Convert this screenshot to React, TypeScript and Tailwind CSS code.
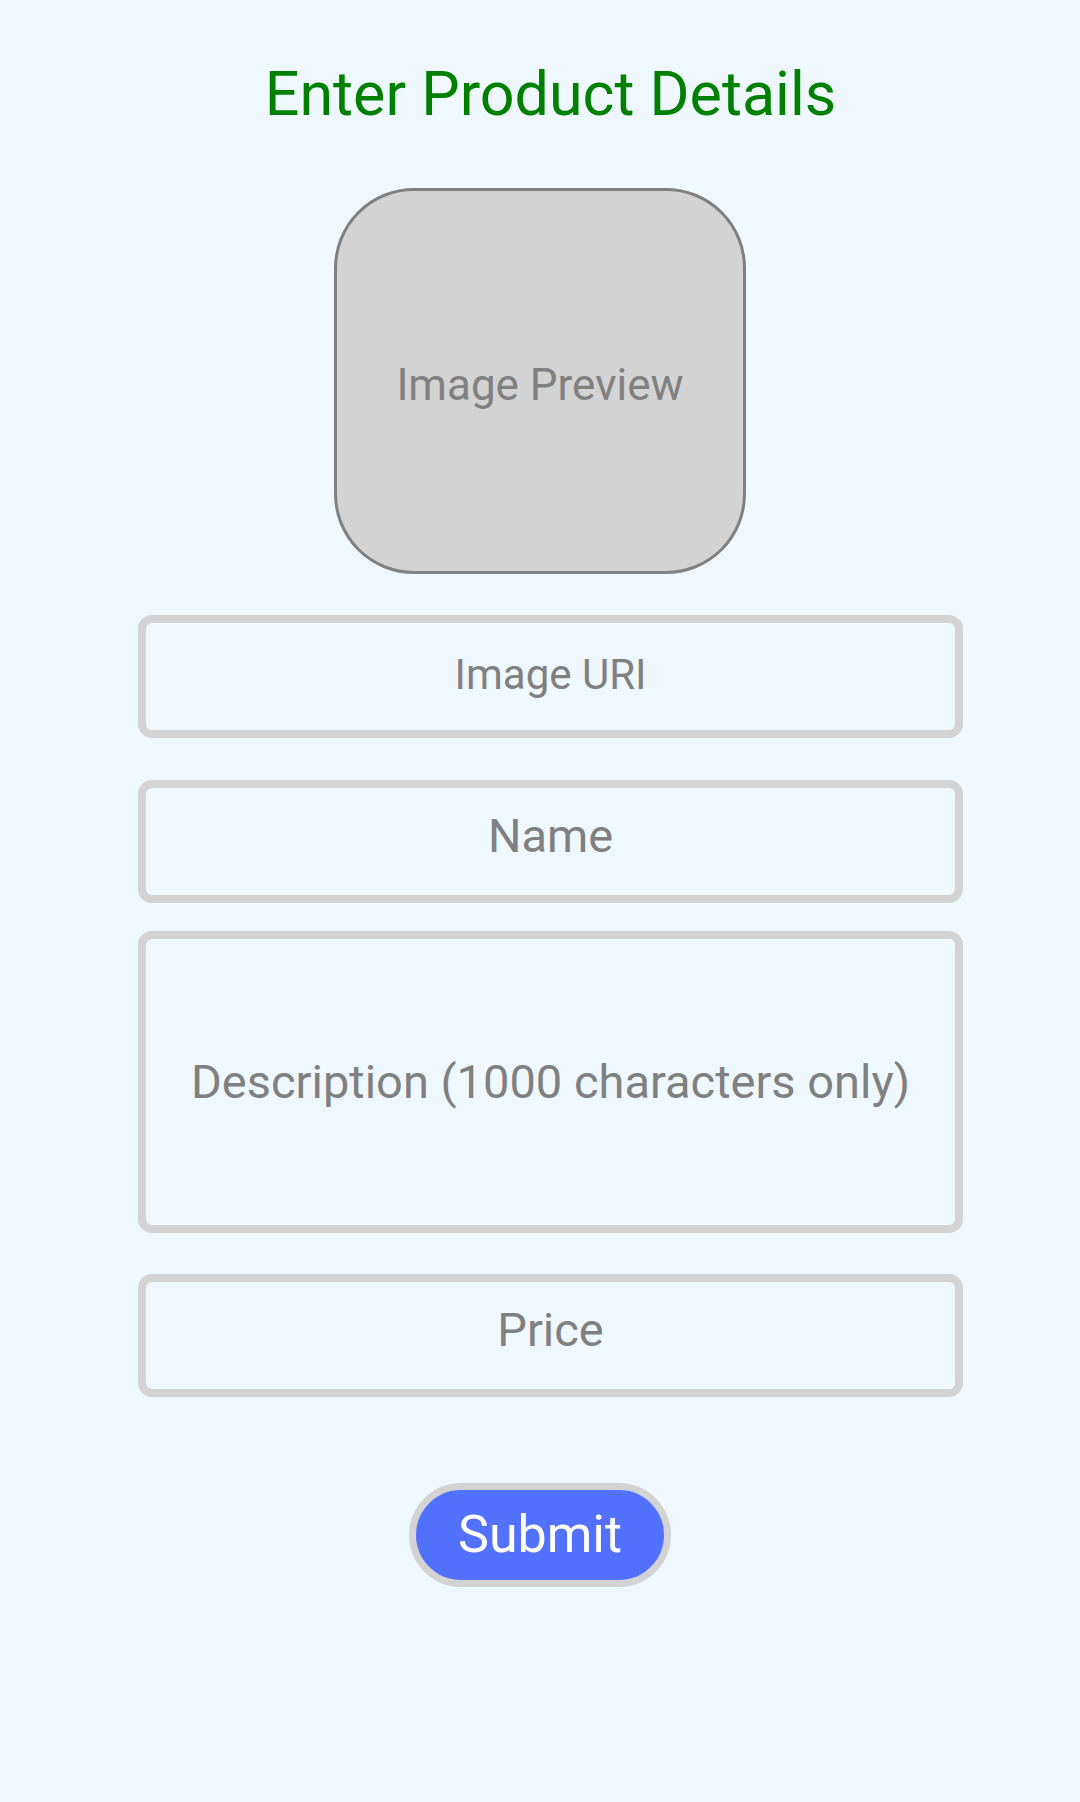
import React from "react";

const inputClass =
  "h-[123px] w-full rounded-[14px] border-[8px] border-[#d3d3d3] bg-transparent pb-[12px] text-center text-[47px] text-[#808080] outline-none placeholder:text-[#808080]";

export default function App() {
  return (
    <div className="min-h-[1802px] w-full bg-[#f0f8ff] font-['Roboto',sans-serif]">
      <div className="flex flex-col items-center pt-[59px]">
        <h1 className="ml-[21px] text-[61px] leading-[70px] font-normal text-[#008000]">
          Enter Product Details
        </h1>

        <div className="mt-[59px] flex h-[386px] w-[412px] items-center justify-center rounded-[80px] border-[3px] border-[#808080] bg-[#d3d3d3] pt-[7px]">
          <span className="text-[44px] text-[#808080]">Image Preview</span>
        </div>

        <div className="mt-[41px] ml-[21px] flex w-[825px] flex-col">
          <input
            className={inputClass + " !pb-[4px]"}
            placeholder="Image URI"
            style={{ fontSize: 42 }}
          />
          <input className={"mt-[42px] " + inputClass} placeholder="Name" />
          <div className="mt-[28px] flex h-[302px] w-full items-center justify-center rounded-[14px] border-[8px] border-[#d3d3d3] text-[47px] text-[#808080]">
            Description (1000 characters only)
          </div>
          <input className={"mt-[41px] " + inputClass} placeholder="Price" />
        </div>

        <button className="mt-[86px] flex h-[104px] w-[262px] items-center justify-center rounded-full border-[7px] border-[#d3d3d3] bg-[#5271ff] text-[52px] text-white">
          Submit
        </button>
      </div>
    </div>
  );
}
